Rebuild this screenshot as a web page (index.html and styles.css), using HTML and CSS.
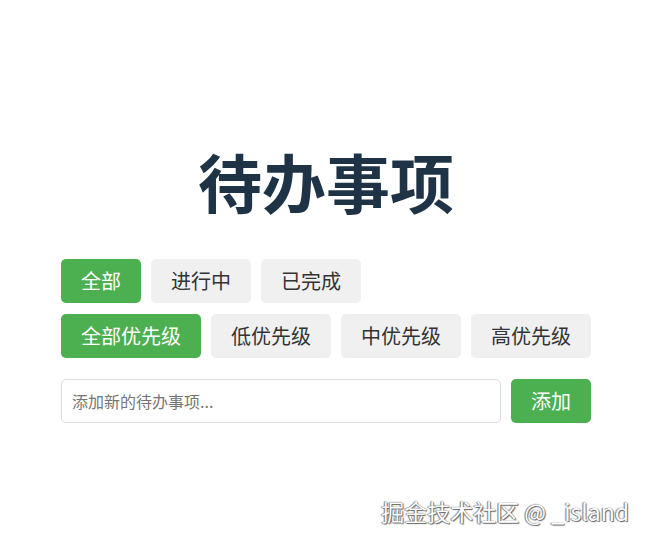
FILE: index.html
```html
<!DOCTYPE html>
<html lang="zh">
<head>
<meta charset="utf-8">
<title>待办事项</title>
<link rel="stylesheet" href="styles.css">
</head>
<body>
<div class="app">
  <h1 class="title">待办事项</h1>
  <div class="filters">
    <div class="row">
      <button class="btn active">全部</button>
      <button class="btn">进行中</button>
      <button class="btn">已完成</button>
    </div>
    <div class="row">
      <button class="btn active">全部优先级</button>
      <button class="btn">低优先级</button>
      <button class="btn">中优先级</button>
      <button class="btn">高优先级</button>
    </div>
  </div>
  <div class="add-row">
    <input class="todo-input" type="text" placeholder="添加新的待办事项...">
    <button class="btn active add-btn">添加</button>
  </div>
</div>
<div class="watermark">掘金技术社区 @ _island</div>
</body>
</html>
```
FILE: styles.css
```css
html, body {
  margin: 0;
  padding: 0;
  background: #fff;
}
body {
  font-family: "Microsoft YaHei", "Noto Sans CJK SC", "Liberation Sans", sans-serif;
  color: #333;
  width: 650px;
  height: 543px;
  overflow: hidden;
}
.app {
  width: 530px;
  margin: 0 auto;
  padding: 140px 0 0 2px;
  box-sizing: content-box;
}
.title {
  margin: 0 0 39px;
  font-size: 64px;
  line-height: 80px;
  font-weight: 700;
  color: #1f3347;
  text-align: center;
}
.filters {
  display: flex;
  flex-direction: column;
  gap: 11px;
}
.row {
  display: flex;
  gap: 10px;
}
.btn {
  height: 44px;
  padding: 0 20px;
  border: none;
  border-radius: 5px;
  background: #f0f0f0;
  color: #333;
  font-family: inherit;
  font-size: 20px;
  line-height: 44px;
  cursor: pointer;
}
.btn.active {
  background: #4caf50;
  color: #fff;
}
.add-row {
  display: flex;
  gap: 10px;
  margin-top: 21px;
}
.todo-input {
  flex: 1;
  height: 44px;
  box-sizing: border-box;
  padding: 0 10px;
  border: 1px solid #ddd;
  border-radius: 5px;
  font-family: inherit;
  font-size: 16px;
  color: #333;
  outline: none;
}
.todo-input::placeholder {
  color: #757575;
}
.add-btn {
  width: 80px;
  flex: none;
}
.watermark {
  position: absolute;
  right: 21px;
  bottom: 15px;
  font-size: 23px;
  color: #fff;
  text-shadow: 0 0 1px #555, 1px 1px 1px #666, -1px 0 1px #888;
}
```
